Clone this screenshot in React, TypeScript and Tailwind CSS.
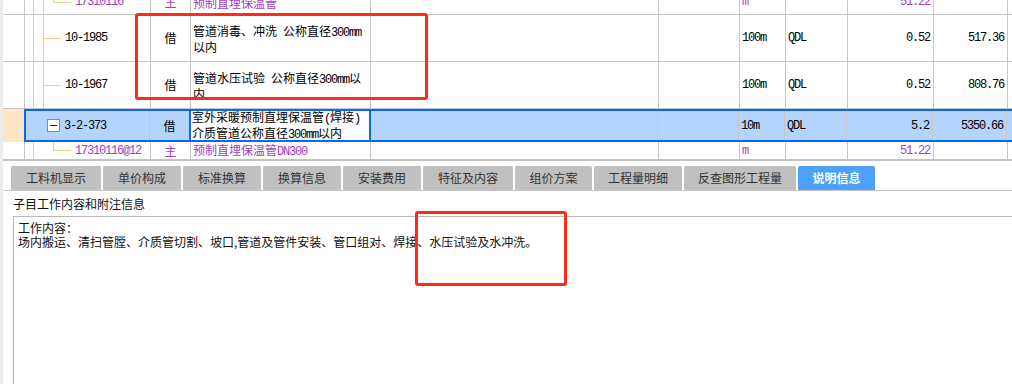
import React from "react";

const LINE = "border-[#c6c6c6]";
const MONO = "font-['Liberation_Mono','Noto_Sans_CJK_SC',monospace] tracking-[-1.2px]";
const CJK = "font-['Noto_Sans_CJK_SC','Liberation_Sans',sans-serif]";
const PURPLE = "text-[#a23ec4]";
const ORANGE = "#ffc886";

// ascii runs get the narrow mono look, cjk stays as is
function Mixed({ text }: { text: string }) {
  const parts = text.split(/([\x20-\x7e]+)/).filter(Boolean);
  return (
    <>
      {parts.map((p, i) =>
        /^[\x20-\x7e]+$/.test(p) ? (
          <span key={i} className={MONO}>
            {p}
          </span>
        ) : (
          <span key={i}>{p}</span>
        )
      )}
    </>
  );
}

type TreeKind = "sub" | "subLast" | "item" | "parent";

function Tree({ kind, h, x0, w }: { kind: TreeKind; h: number; x0: number; w: number }) {
  const m = Math.floor(h / 2) + 0.5;
  return (
    <svg
      className="absolute left-0 top-0"
      width={w}
      height={h}
      viewBox={`${x0} 0 ${w} ${h}`}
      fill="none"
      stroke={ORANGE}
      strokeWidth={1}
    >
      <line x1={33.5} y1={0} x2={33.5} y2={h} />
      {(kind === "sub" || kind === "item") && <line x1={43.5} y1={0} x2={43.5} y2={h} />}
      {(kind === "sub" || kind === "subLast") && (
        <>
          <line x1={53.5} y1={0} x2={53.5} y2={m} />
          <line x1={53} y1={m} x2={71} y2={m} />
        </>
      )}
      {kind === "item" && <line x1={43} y1={m} x2={61} y2={m} />}
      {kind === "parent" && (
        <>
          <line x1={43.5} y1={0} x2={43.5} y2={m} />
          <line x1={43} y1={m} x2={47} y2={m} />
          <line x1={53.5} y1={m + 6} x2={53.5} y2={h} />
          <rect x={47.5} y={m - 6} width={12} height={12} fill="#fff" stroke="#8a8a8a" />
          <line x1={50} y1={m} x2={57} y2={m} stroke="#222" />
        </>
      )}
    </svg>
  );
}

type RowData = {
  tree: TreeKind;
  code: string;
  type: string;
  name: string[];
  unit: string;
  qdl: string;
  qty: string;
  price: string;
  sub?: boolean;
};

function NormalRow({ r, h, className = "" }: { r: RowData; h: number; className?: string }) {
  const color = r.sub ? PURPLE : "text-black";
  return (
    <div className={`flex shrink-0 border-b ${LINE} ${color} ${className}`} style={{ height: h }}>
      <div className={`w-[22px] shrink-0 border-r ${LINE}`} />
      <div className={`relative w-[126px] shrink-0 border-r ${LINE} flex items-center`}>
        <Tree kind={r.tree} h={h - 1} x0={25} w={125} />
        <span className={`relative ${MONO} ${r.sub ? "pl-[50px]" : "pl-[40px]"}`}>{r.code}</span>
      </div>
      <div className={`w-[40px] shrink-0 border-r ${LINE} flex items-center justify-center`}>{r.type}</div>
      <div className={`w-[180px] shrink-0 border-r ${LINE} flex flex-col justify-center pl-[2px] leading-[13px]`}>
        {r.name.map((n) => (
          <div key={n} className="whitespace-nowrap">
            <Mixed text={n} />
          </div>
        ))}
      </div>
      <div className={`w-[288px] shrink-0 border-r ${LINE}`} />
      <div className={`w-[81px] shrink-0 border-r ${LINE}`} />
      <div className={`w-[46px] shrink-0 border-r ${LINE} flex items-center pl-[2px] ${MONO}`}>{r.unit}</div>
      <div className={`w-[62px] shrink-0 border-r ${LINE} flex items-center pl-[2px] ${MONO}`}>{r.qdl}</div>
      <div className={`w-[86px] shrink-0 border-r ${LINE} flex items-center justify-end pr-[3px] ${MONO}`}>{r.qty}</div>
      <div className={`w-[74px] shrink-0 border-r ${LINE} flex items-center justify-end pr-[3px] ${MONO}`}>{r.price}</div>
      <div className="flex-1" />
    </div>
  );
}

function SelectedRow() {
  return (
    <div className="flex h-[33px] shrink-0 text-black">
      <div className="w-[21px] shrink-0 bg-[#fee5c6]" />
      <div className="flex flex-1 border-y-2 border-l-2 border-[#0b66f2] bg-[#b4d4fc]">
        <div className={`relative w-[124px] shrink-0 border-r ${LINE} flex items-center`}>
          <Tree kind="parent" h={29} x0={26} w={124} />
          <span className={`relative ${MONO} pl-[38px]`}>3-2-373</span>
        </div>
        <div className="w-[39px] shrink-0 flex items-center justify-center">借</div>
        <div className="w-[182px] shrink-0 border-x-2 border-[#0b66f2] bg-white flex flex-col justify-center pl-[1px] leading-[13px]">
          <div className="whitespace-nowrap">
            <Mixed text="室外采暖预制直埋保温管(焊接)" />
          </div>
          <div className="whitespace-nowrap">
            <Mixed text="介质管道公称直径300mm以内" />
          </div>
        </div>
        <div className={`w-[287px] shrink-0 border-r ${LINE}`} />
        <div className={`w-[81px] shrink-0 border-r ${LINE}`} />
        <div className={`w-[46px] shrink-0 border-r ${LINE} flex items-center pl-[2px] ${MONO}`}>10m</div>
        <div className={`w-[62px] shrink-0 border-r ${LINE} flex items-center pl-[2px] ${MONO}`}>QDL</div>
        <div className={`w-[86px] shrink-0 border-r ${LINE} flex items-center justify-end pr-[3px] ${MONO}`}>5.2</div>
        <div className={`w-[74px] shrink-0 border-r ${LINE} flex items-center justify-end pr-[3px] ${MONO}`}>5350.66</div>
        <div className="flex-1" />
      </div>
    </div>
  );
}

const tabs = [
  { label: "工料机显示", w: "w-[90px]" },
  { label: "单价构成", w: "w-[78px]" },
  { label: "标准换算", w: "w-[78px]" },
  { label: "换算信息", w: "w-[78px]" },
  { label: "安装费用", w: "w-[78px]" },
  { label: "特征及内容", w: "w-[90px]" },
  { label: "组价方案", w: "w-[77px]" },
  { label: "工程量明细", w: "w-[88px]" },
  { label: "反查图形工程量", w: "w-[112px]" },
  { label: "说明信息", w: "w-[77px]", active: true },
];

export default function App() {
  const row0: RowData = {
    tree: "sub", code: "17310116", type: "主", name: ["预制直埋保温管"],
    unit: "m", qdl: "", qty: "51.22", price: "", sub: true,
  };
  const row1: RowData = {
    tree: "item", code: "10-1985", type: "借", name: ["管道消毒、冲洗 公称直径300mm", "以内"],
    unit: "100m", qdl: "QDL", qty: "0.52", price: "517.36",
  };
  const row2: RowData = {
    tree: "item", code: "10-1967", type: "借", name: ["管道水压试验 公称直径300mm以", "内"],
    unit: "100m", qdl: "QDL", qty: "0.52", price: "808.76",
  };
  const row4: RowData = {
    tree: "subLast", code: "17310116@12", type: "主", name: ["预制直埋保温管DN300"],
    unit: "m", qdl: "", qty: "51.22", price: "", sub: true,
  };

  return (
    <div className={`relative w-[1012px] h-[384px] overflow-hidden bg-white border-l-[3px] border-[#ececec] text-[12px] ${CJK}`}>
      {/* grid */}
      <div className="flex flex-col h-[161px] overflow-hidden border-b-2 border-[#c2c2c2]">
        <NormalRow r={row0} h={25} className="-mt-[10px]" />
        <NormalRow r={row1} h={47} />
        <NormalRow r={row2} h={47} />
        <SelectedRow />
        <NormalRow r={row4} h={18} className="border-b-0" />
      </div>

      {/* tabs */}
      <div className={`flex items-end gap-[2px] h-[30px] pl-[8px] border-b ${LINE}`}>
        {tabs.map((t) => (
          <div
            key={t.label}
            className={`${t.w} h-[24px] rounded-t-[2px] flex items-center justify-center ${
              t.active ? "bg-[#4ba1fb] text-white font-bold" : "bg-[#c0c0c0] text-[#333]"
            }`}
          >
            {t.label}
          </div>
        ))}
      </div>

      <div className="h-[25px] flex items-center pl-[10px] text-[#111]">子目工作内容和附注信息</div>

      <div className="ml-[10px] h-[200px] border-l border-t border-[#b8b8b8] pl-[4px] pt-[4px] leading-[14px] text-[#111]">
        <div>工作内容：</div>
        <div>场内搬运、清扫管膛、介质管切割、坡口,管道及管件安装、管口组对、焊接、水压试验及水冲洗。</div>
      </div>

      {/* annotation boxes */}
      <div className="absolute left-[132px] top-[13px] w-[293px] h-[87px] border-[3px] border-[#ff2a1a] rounded-[3px]" />
      <div className="absolute left-[412px] top-[211px] w-[152px] h-[75px] border-[3px] border-[#ff2a1a] rounded-[3px]" />
    </div>
  );
}
